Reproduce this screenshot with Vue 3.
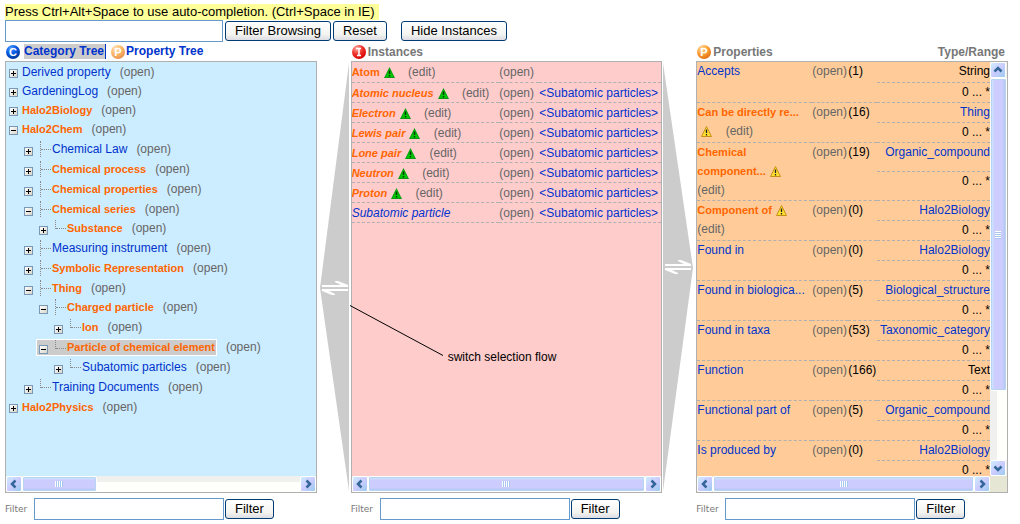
<script setup>
import { ref } from 'vue'

const n = (label, opts = {}) => ({ label, ...opts })

const tree = [
  n('Derived property'),
  n('GardeningLog'),
  n('Halo2Biology', { hot: true }),
  n('Halo2Chem', { hot: true, open: true }),
  n('Chemical Law', { level: 1 }),
  n('Chemical process', { level: 1, hot: true }),
  n('Chemical properties', { level: 1, hot: true }),
  n('Chemical series', { level: 1, hot: true, open: true }),
  n('Substance', { level: 2, hot: true, last: true, first: true }),
  n('Measuring instrument', { level: 1 }),
  n('Symbolic Representation', { level: 1, hot: true }),
  n('Thing', { level: 1, hot: true, open: true }),
  n('Charged particle', { level: 2, hot: true, open: true, first: true }),
  n('Ion', { level: 3, hot: true, last: true }),
  n('Particle of chemical element', { level: 2, hot: true, open: true, last: true, selected: true }),
  n('Subatomic particles', { level: 3, last: true }),
  n('Training Documents', { level: 1, last: true }),
  n('Halo2Physics', { hot: true }),
]

const instances = [
  { name: 'Atom', warn: true, upright: true },
  { name: 'Atomic nucleus', warn: true, type: '<Subatomic particles>' },
  { name: 'Electron', warn: true, type: '<Subatomic particles>' },
  { name: 'Lewis pair', warn: true, type: '<Subatomic particles>' },
  { name: 'Lone pair', warn: true, type: '<Subatomic particles>' },
  { name: 'Neutron', warn: true, type: '<Subatomic particles>' },
  { name: 'Proton', warn: true, type: '<Subatomic particles>' },
  { name: 'Subatomic particle', type: '<Subatomic particles>' },
]

const properties = [
  { name: 'Accepts', count: 1, type: 'String', plain: true },
  { name: 'Can be directly re...', count: 16, type: 'Thing', warn: true },
  { name: 'Chemical component...', count: 19, type: 'Organic_compound', warn: true },
  { name: 'Component of', count: 0, type: 'Halo2Biology', warn: true },
  { name: 'Found in', count: 0, type: 'Halo2Biology' },
  { name: 'Found in biologica...', count: 5, type: 'Biological_structure' },
  { name: 'Found in taxa', count: 53, type: 'Taxonomic_category' },
  { name: 'Function', count: 166, type: 'Text', plain: true },
  { name: 'Functional part of', count: 5, type: 'Organic_compound' },
  { name: 'Is produced by', count: 0, type: 'Halo2Biology' },
]

const query = ref('')
const treeFilter = ref('')
const instanceFilter = ref('')
const propertyFilter = ref('')
</script>

<template>
  <div class="page">
    <p class="notice"><span>Press Ctrl+Alt+Space to use auto-completion. (Ctrl+Space in IE)</span></p>
    <form class="toolbar" @submit.prevent>
      <input v-model="query" class="field" type="text" aria-label="Filter browsing" />
      <button class="btn" type="submit">Filter Browsing</button>
      <button class="btn" type="reset">Reset</button>
      <button class="btn apart" type="button">Hide Instances</button>
    </form>

    <div class="columns">
      <section class="column">
        <header class="head">
          <svg class="ball" viewBox="0 0 14 14" aria-hidden="true">
            <defs>
              <radialGradient id="blue" cx="35%" cy="25%" r="75%">
                <stop offset="0" stop-color="#4f9bff" /><stop offset=".5" stop-color="#0a5be8" /><stop offset="1" stop-color="#003a9c" />
              </radialGradient>
            </defs>
            <circle cx="7" cy="7" r="7" fill="url(#blue)" />
            <text x="7" y="11" text-anchor="middle">C</text>
          </svg>
          <a class="tab current" href="#categories">Category Tree</a>
          <svg class="ball pale" viewBox="0 0 14 14" aria-hidden="true">
            <circle cx="7" cy="7" r="7" fill="url(#orange)" />
            <text x="7" y="11" text-anchor="middle">P</text>
          </svg>
          <a class="tab" href="#properties">Property Tree</a>
        </header>
        <div class="panel blue">
          <div class="body">
            <ul class="tree">
              <li
                v-for="item in tree"
                :key="item.label"
                class="node"
                :class="['level-' + (item.level || 0), { first: item.first }]"
              >
                <span class="entry" :class="{ selected: item.selected }">
                  <button class="toggle" type="button" :aria-label="(item.open ? 'Collapse ' : 'Expand ') + item.label">
                    <svg viewBox="0 0 9 9" aria-hidden="true">
                      <path d="M2 4.5h5" />
                      <path v-if="!item.open" d="M4.5 2v5" />
                    </svg>
                  </button>
                  <i v-if="item.level" class="guide" :class="{ last: item.last }"></i>
                  <a class="name" :class="{ hot: item.hot }" href="#node">{{ item.label }}</a>
                </span>
                <a class="muted open" href="#open">(open)</a>
              </li>
            </ul>
          </div>
          <div class="hbar">
            <button class="arrow" type="button" aria-label="Scroll left"><svg viewBox="0 0 14 14"><path d="M8.5 3.5L5 7l3.500 3.500" /></svg></button>
            <div class="track"><div class="thumb short"><i class="grip"></i></div></div>
            <button class="arrow" type="button" aria-label="Scroll right"><svg viewBox="0 0 14 14"><path d="M5.500 3.500L9 7l-3.500 3.500" /></svg></button>
          </div>
        </div>
        <form class="filter" @submit.prevent>
          <label for="f1">Filter</label>
          <input id="f1" v-model="treeFilter" class="field" type="text" />
          <button class="btn" type="submit">Filter</button>
        </form>
      </section>

      <button class="flow" type="button" aria-label="Switch selection flow between categories and instances">
        <svg class="wedge" viewBox="0 0 34 432" preserveAspectRatio="none" aria-hidden="true">
          <path d="M32 2V430L3 227Z" />
        </svg>
        <svg class="swap" viewBox="0 0 26 14" aria-hidden="true">
          <path d="M0 4h19L13 1V0h3l10 4v2H0zM26 10H7l6 3v1h-3L0 10V8h26z" />
        </svg>
      </button>

      <section class="column">
        <header class="head">
          <svg class="ball" viewBox="0 0 14 14" aria-hidden="true">
            <defs>
              <radialGradient id="red" cx="35%" cy="25%" r="75%">
                <stop offset="0" stop-color="#ffb0a8" /><stop offset=".5" stop-color="#f03a34" /><stop offset="1" stop-color="#d80000" />
              </radialGradient>
            </defs>
            <circle cx="7" cy="7" r="7" fill="url(#red)" />
            <path d="M4 3.500h5M7 3.500v7M5 10.500h4" stroke="#fff" stroke-width="1.500" fill="none" />
          </svg>
          <h2 class="title">Instances</h2>
        </header>
        <div class="panel pink">
          <div class="body">
            <table class="instances">
              <tbody>
                <tr v-for="row in instances" :key="row.name">
                  <td class="who">
                    <a class="name" :class="{ hot: row.warn, slant: !row.upright }" href="#instance">{{ row.name }}</a>
                    <template v-if="row.warn"><svg class="warn" viewBox="0 0 11 11" aria-hidden="true"><path d="M5.500 0L11 11H0z" fill="#0a9a14" /><path d="M5.500 1.500L9.500 10h-8z" fill="#00c800" /><path d="M5.500 3.500v3.500M5.500 8v1.500" stroke="#003c00" stroke-width="1.500" /></svg> <a class="muted" href="#edit">(edit)</a></template>
                  </td>
                  <td class="act"><a class="muted" href="#open">(open)</a></td>
                  <td class="kind"><a class="name" href="#type">{{ row.type }}</a></td>
                </tr>
              </tbody>
            </table>
          </div>
          <div class="hbar">
            <button class="arrow" type="button" aria-label="Scroll left"><svg viewBox="0 0 14 14"><path d="M8.500 3.500L5 7l3.500 3.500" /></svg></button>
            <div class="track"><div class="thumb"><i class="grip"></i></div></div>
            <button class="arrow" type="button" aria-label="Scroll right"><svg viewBox="0 0 14 14"><path d="M5.500 3.500L9 7l-3.500 3.500" /></svg></button>
          </div>
          <div class="callout">
            <svg viewBox="0 0 94 51" aria-hidden="true"><path d="M0 .5L93 50.500" /></svg>
            <span>switch selection flow</span>
          </div>
        </div>
        <form class="filter" @submit.prevent>
          <label for="f2">Filter</label>
          <input id="f2" v-model="instanceFilter" class="field" type="text" />
          <button class="btn" type="submit">Filter</button>
        </form>
      </section>

      <button class="flow right" type="button" aria-label="Switch selection flow between instances and properties">
        <svg class="wedge" viewBox="0 0 34 432" preserveAspectRatio="none" aria-hidden="true">
          <path d="M1 2V430L31 207Z" />
        </svg>
        <svg class="swap" viewBox="0 0 26 14" aria-hidden="true">
          <path d="M0 4h19L13 1V0h3l10 4v2H0zM26 10H7l6 3v1h-3L0 10V8h26z" />
        </svg>
      </button>

      <section class="column">
        <header class="head">
          <svg class="ball" viewBox="0 0 14 14" aria-hidden="true">
            <defs>
              <radialGradient id="orange" cx="35%" cy="25%" r="80%">
                <stop offset="0" stop-color="#ffd9a0" /><stop offset=".5" stop-color="#fba43c" /><stop offset="1" stop-color="#e06a10" />
              </radialGradient>
            </defs>
            <circle cx="7" cy="7" r="7" fill="url(#orange)" />
            <text x="7" y="11" text-anchor="middle">P</text>
          </svg>
          <h2 class="title">Properties</h2>
          <span class="title range">Type/Range</span>
        </header>
        <div class="panel orange">
          <div class="split">
            <div class="body">
              <table class="properties">
                <tbody v-for="row in properties" :key="row.name">
                  <tr>
                    <td class="who" rowspan="2">
                      <a class="name" :class="{ hot: row.warn }" href="#property">{{ row.name }}</a>
                      <template v-if="row.warn"><svg class="warn" viewBox="0 0 11 11" aria-hidden="true"><path d="M5.500 .5L10.500 10.500H.5z" fill="#ffe030" stroke="#c89018" /><path d="M5.500 3.500v3.500M5.500 8v1.500" stroke="#222" stroke-width="1.300" /></svg> <a class="muted" href="#edit">(edit)</a></template>
                    </td>
                    <td class="act" rowspan="2"><a class="muted" href="#open">(open)</a></td>
                    <td class="count" rowspan="2">({{ row.count }})</td>
                    <td class="kind"><span v-if="row.plain">{{ row.type }}</span><a v-else class="name" href="#type">{{ row.type }}</a></td>
                  </tr>
                  <tr><td class="kind">0 ... *</td></tr>
                </tbody>
              </table>
            </div>
            <div class="vbar">
              <button class="arrow" type="button" aria-label="Scroll up"><svg viewBox="0 0 14 14"><path d="M3.500 8.500L7 5l3.500 3.500" /></svg></button>
              <div class="track"><div class="thumb"><i class="grip"></i></div></div>
              <button class="arrow" type="button" aria-label="Scroll down"><svg viewBox="0 0 14 14"><path d="M3.500 5.500L7 9l3.500-3.500" /></svg></button>
            </div>
          </div>
          <div class="hbar cornered">
            <button class="arrow" type="button" aria-label="Scroll left"><svg viewBox="0 0 14 14"><path d="M8.500 3.500L5 7l3.500 3.500" /></svg></button>
            <div class="track"><div class="thumb"><i class="grip"></i></div></div>
            <button class="arrow" type="button" aria-label="Scroll right"><svg viewBox="0 0 14 14"><path d="M5.500 3.500L9 7l-3.500 3.500" /></svg></button>
          </div>
        </div>
        <form class="filter" @submit.prevent>
          <label for="f3">Filter</label>
          <input id="f3" v-model="propertyFilter" class="field" type="text" />
          <button class="btn" type="submit">Filter</button>
        </form>
      </section>
    </div>
  </div>
</template>

<style>
body { background: #fff; }
</style>

<style scoped>
.page {
  box-sizing: border-box;
  height: 100vh;
  min-height: 300px;
  padding: 4px 12px 4px 5px;
  display: flex;
  flex-direction: column;
  font: 12px/16px "Liberation Sans", Arial, sans-serif;
  color: #000;
}
.page *, .page *::before { box-sizing: border-box; }
a { text-decoration: none; color: #0033cc; }
button { font: inherit; padding: 0; }
.notice { margin: 0; font-size: 13px; height: 16px; }
.notice span { display: inline-block; background: #ffff99; padding-right: 4px; }
.toolbar { display: flex; align-items: center; gap: 2px; height: 22px; }
.field {
  width: 190px;
  min-width: 0;
  height: 22px;
  padding: 0 4px;
  border: 1px solid #6699cc;
  background: #fff;
  font: inherit;
}
.toolbar .field { width: 218px; }
.btn {
  height: 20px;
  padding: 0 9px;
  border: 1px solid #003c74;
  border-radius: 3px;
  background: linear-gradient(#fff, #f3f3f0 70%, #dcdce4);
  color: #000;
  font-size: 13px;
  line-height: 18px;
  white-space: nowrap;
}
.apart { margin-left: 12px; }

.columns {
  flex: 1;
  min-height: 0;
  display: grid;
  grid-template-columns: minmax(0, 1fr) 34px minmax(0, 1fr) 34px minmax(0, 1fr);
}
.column { display: flex; flex-direction: column; min-height: 0; }
.head { display: flex; align-items: center; height: 19px; padding-left: 1px; flex: none; }
.ball { width: 14px; height: 14px; flex: none; }
.ball text { font: bold 11px "Liberation Sans", Arial, sans-serif; fill: #fff; }
.pale { opacity: .75; margin-left: 5px; }
.tab { font-weight: bold; padding-left: 1px; line-height: 15px; }
.tab.current { background: #ccc; margin-left: 4px; padding: 0 1px 0 0; border-right: 1px solid #0033cc; }
.title { margin: 0 0 0 2px; font-size: 12px; font-weight: bold; color: #777; }
.range { margin-left: auto; padding-right: 3px; }

.panel {
  position: relative;
  flex: 1;
  min-height: 0;
  border: 1px solid #b0b0b0;
  display: flex;
  flex-direction: column;
}
.blue { background: #ccecff; }
.pink { background: #ffcccc; }
.orange { background: #ffcc99; }
.body { flex: 1; min-width: 0; min-height: 0; overflow: hidden; }
.split { flex: 1; min-height: 0; display: flex; }

.tree { list-style: none; margin: 0; padding: 0 0 0 3px; }
.node { display: flex; align-items: center; height: 20px; }
.level-0 { height: 19px; }
.level-0 + .level-1 { margin-top: 1px; }
.level-1 { padding-left: 15px; }
.level-2 { padding-left: 30px; }
.level-3 { padding-left: 45px; }
.first { margin-top: -1px; }
.entry { display: flex; align-items: center; height: 17px; }
.selected {
  margin-left: -3px;
  padding: 0 1px 0 2px;
  border: 1px solid #fff;
  background: #ccc;
}
.toggle {
  width: 9px;
  height: 9px;
  margin: 4px 4px 0 0;
  border: 1px solid #7898b5;
  background: linear-gradient(135deg, #fff, #d8d4c8);
  flex: none;
}
.toggle svg { display: block; width: 9px; height: 9px; margin: -1px; }
.toggle path { stroke: #000; stroke-width: 1; fill: none; }
.guide { width: 12px; height: 16px; margin-left: 3px; position: relative; border-left: 1px dotted #888; }
.guide.last { height: 9px; align-self: flex-start; }
.guide::before { content: ""; position: absolute; left: 0; right: 1px; top: 8px; border-top: 1px dotted #888; }
.hot { color: #ff6600; font-size: 11px; font-weight: bold; }
.slant { font-style: italic; }
.muted { color: #666; }
.open { margin-left: 9px; }

table { width: 100%; border-collapse: collapse; line-height: 17px; }
td { padding: 2px 0 0; height: 20px; vertical-align: top; border-bottom: 1px dashed #b0b0b0; white-space: nowrap; }
.act { width: 40px; }
.instances .kind { width: 122px; }
.warn { width: 11px; height: 11px; margin: 0 10px 0 4px; vertical-align: -2px; }
.properties td { padding-top: 1px; }
.properties .who { width: 115px; padding: 0 4px 0 0; white-space: normal; line-height: 19px; }
.properties .act { width: 36px; }
.properties .count { width: 29px; }
.properties .kind { text-align: right; }

.hbar, .vbar { display: flex; flex: none; background: #f0f0ee; }
.hbar { height: 16px; }
.vbar { width: 17px; flex-direction: column; }
.cornered { padding-right: 17px; background: #e6e6d4; }
.arrow {
  width: 16px;
  height: 16px;
  flex: none;
  border: 1px solid #fff;
  border-radius: 2px;
  background: linear-gradient(135deg, #ccecff, #ccccff 50%, #99ccee);
}
.arrow svg { display: block; width: 14px; height: 14px; }
.arrow path { fill: none; stroke: #336699; stroke-width: 2.500; }
.track { flex: 1; min-width: 0; min-height: 0; background: linear-gradient(#f0f0ee 40%, #fffffb 40%); }
.vbar .track { background: linear-gradient(90deg, #f0f0ee 40%, #fffffb 40%); }
.thumb {
  display: flex;
  align-items: center;
  justify-content: center;
  width: 100%;
  height: 100%;
  border: 1px solid #fff;
  border-radius: 2px;
  background: linear-gradient(#ccecff, #ccccff 25%, #ccccff 75%, #a8c8ee);
  box-shadow: inset 0 0 0 1px #b8d4f0;
}
.short { width: 27%; }
.vbar .thumb { height: 82%; background: linear-gradient(90deg, #ccecff, #ccccff 25%, #ccccff 75%, #a8c8ee); }
.grip { width: 8px; height: 6px; background: repeating-linear-gradient(90deg, #fff 0 1px, #a8c8f0 1px 2px); }
.vbar .grip { width: 6px; height: 8px; background: repeating-linear-gradient(#fff 0 1px, #a8c8f0 1px 2px); }

.flow { position: relative; border: 0; background: none; margin: 19px 0 27px; min-height: 0; overflow: hidden; }
.wedge { position: absolute; inset: 0; width: 100%; height: 100%; }
.wedge path { fill: #ccc; }
.swap { position: absolute; width: 26px; height: 14px; left: 5px; top: 51%; }
.right .swap { left: 3px; top: 46%; }
.swap path { fill: #fff; }

.callout { position: absolute; left: -2px; top: 56.5%; display: flex; align-items: flex-end; gap: 4px; white-space: nowrap; }
.callout svg { width: 94px; height: 51px; margin-bottom: 9px; }
.callout path { stroke: #000; stroke-width: 1; fill: none; }

.filter { display: flex; align-items: center; height: 22px; margin-top: 5px; flex: none; }
.filter label { width: 29px; flex: none; font: 9px/12px "DejaVu Sans", Verdana, sans-serif; color: #777; }
.filter .btn { margin-left: 1px; }
</style>
